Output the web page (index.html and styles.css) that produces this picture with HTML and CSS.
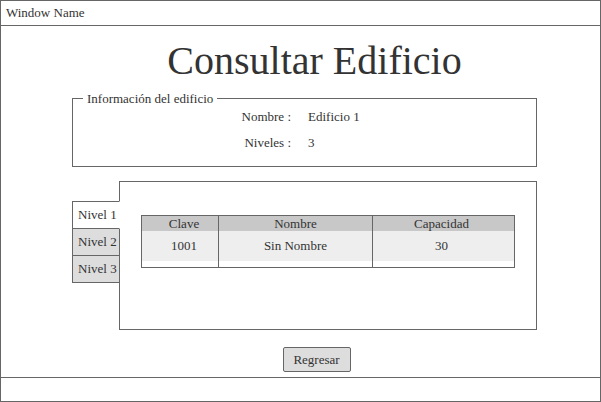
FILE: index.html
```html
<!DOCTYPE html>
<html lang="es">
<head>
<meta charset="utf-8">
<title>Consultar Edificio</title>
<link rel="stylesheet" href="styles.css">
</head>
<body>
<div class="window">
  <div class="titlebar">Window Name</div>
  <div class="content">
    <h1 class="heading">Consultar Edificio</h1>
    <fieldset class="info">
      <legend class="info-legend">Información del edificio</legend>
      <div class="info-grid">
        <div class="info-label">Nombre :</div>
        <div class="info-value">Edificio 1</div>
        <div class="info-label">Niveles :</div>
        <div class="info-value">3</div>
      </div>
    </fieldset>
    <div class="tabs-area">
      <div class="tabs">
        <div class="tab tab-active">Nivel 1</div>
        <div class="tab">Nivel 2</div>
        <div class="tab">Nivel 3</div>
      </div>
      <div class="panel">
        <table class="grid">
          <thead>
            <tr><th class="c1">Clave</th><th class="c2">Nombre</th><th class="c3">Capacidad</th></tr>
          </thead>
          <tbody>
            <tr class="row"><td class="c1">1001</td><td class="c2">Sin Nombre</td><td class="c3">30</td></tr>
            <tr class="filler"><td></td><td></td><td></td></tr>
          </tbody>
        </table>
      </div>
    </div>
    <div class="actions">
      <button class="btn" type="button">Regresar</button>
    </div>
  </div>
  <div class="footer"></div>
</div>
</body>
</html>
```
FILE: styles.css
```css
html, body {
  margin: 0;
  padding: 0;
  background: #fff;
}
body {
  font-family: "Liberation Serif", "Times New Roman", serif;
  font-size: 13px;
  color: #333;
}
.window {
  width: 601px;
  height: 402px;
  box-sizing: border-box;
  border: 1px solid #666;
  display: flex;
  flex-direction: column;
}
.titlebar {
  height: 25px;
  box-sizing: border-box;
  border-bottom: 1px solid #666;
  padding-left: 5px;
  line-height: 24px;
}
.content {
  flex: 1;
  display: flex;
  flex-direction: column;
}
.heading {
  margin: 15px 0 0 0;
  padding-left: 28px;
  font-size: 40px;
  line-height: 40px;
  font-weight: normal;
  text-align: center;
}
.info {
  margin: 11px 0 0 71px;
  width: 465px;
  box-sizing: border-box;
  border: 1px solid #666;
  padding: 1px 0 13px 0;
  min-width: 0;
}
.info-legend {
  margin-left: 10px;
  padding: 0 4px;
  line-height: 13px;
}
.info-grid {
  display: grid;
  grid-template-columns: 218px auto;
  column-gap: 17px;
  row-gap: 6px;
  line-height: 20px;
  margin-top: 1px;
}
.info-label {
  text-align: right;
}
.tabs-area {
  display: flex;
  margin: 14px 0 0 71px;
}
.tabs {
  width: 48px;
  margin-top: 20px;
  display: flex;
  flex-direction: column;
}
.tab {
  height: 28px;
  box-sizing: border-box;
  border: 1px solid #666;
  background: #ddd;
  padding-left: 5px;
  line-height: 26px;
  margin-top: -1px;
}
.tab:first-child {
  margin-top: 0;
}
.tab-active {
  background: #fff;
  border-right-color: #fff;
  position: relative;
  z-index: 1;
}
.panel {
  margin-left: -1px;
  width: 418px;
  height: 149px;
  box-sizing: border-box;
  border: 1px solid #666;
  padding: 33px 0 0 21px;
}
.grid {
  border-collapse: collapse;
  border: 1px solid #666;
  table-layout: fixed;
  width: 374px;
}
.grid th,
.grid td {
  padding: 0;
  text-align: center;
  font-weight: normal;
  border-left: 1px solid #666;
  border-right: 1px solid #666;
}
.grid th {
  background: #c8c8c8;
  height: 15px;
  line-height: 15px;
}
.grid .c1 { width: 77px; padding-left: 8px; box-sizing: border-box; }
.grid .c2 { width: 153px; }
.grid .c3 { padding-right: 4px; }
.row td {
  background: #eee;
  height: 30px;
  line-height: 30px;
}
.filler td {
  height: 6px;
  background: #fff;
}
.actions {
  margin-top: 17px;
  padding-left: 32px;
  display: flex;
  justify-content: center;
}
.btn {
  width: 68px;
  height: 25px;
  box-sizing: border-box;
  border: 1px solid #666;
  border-radius: 2px;
  background: #ddd;
  font-family: "Liberation Serif", "Times New Roman", serif;
  font-size: 13px;
  color: #333;
  padding: 0;
}
.footer {
  height: 24px;
  box-sizing: border-box;
  border-top: 1px solid #666;
}
```
